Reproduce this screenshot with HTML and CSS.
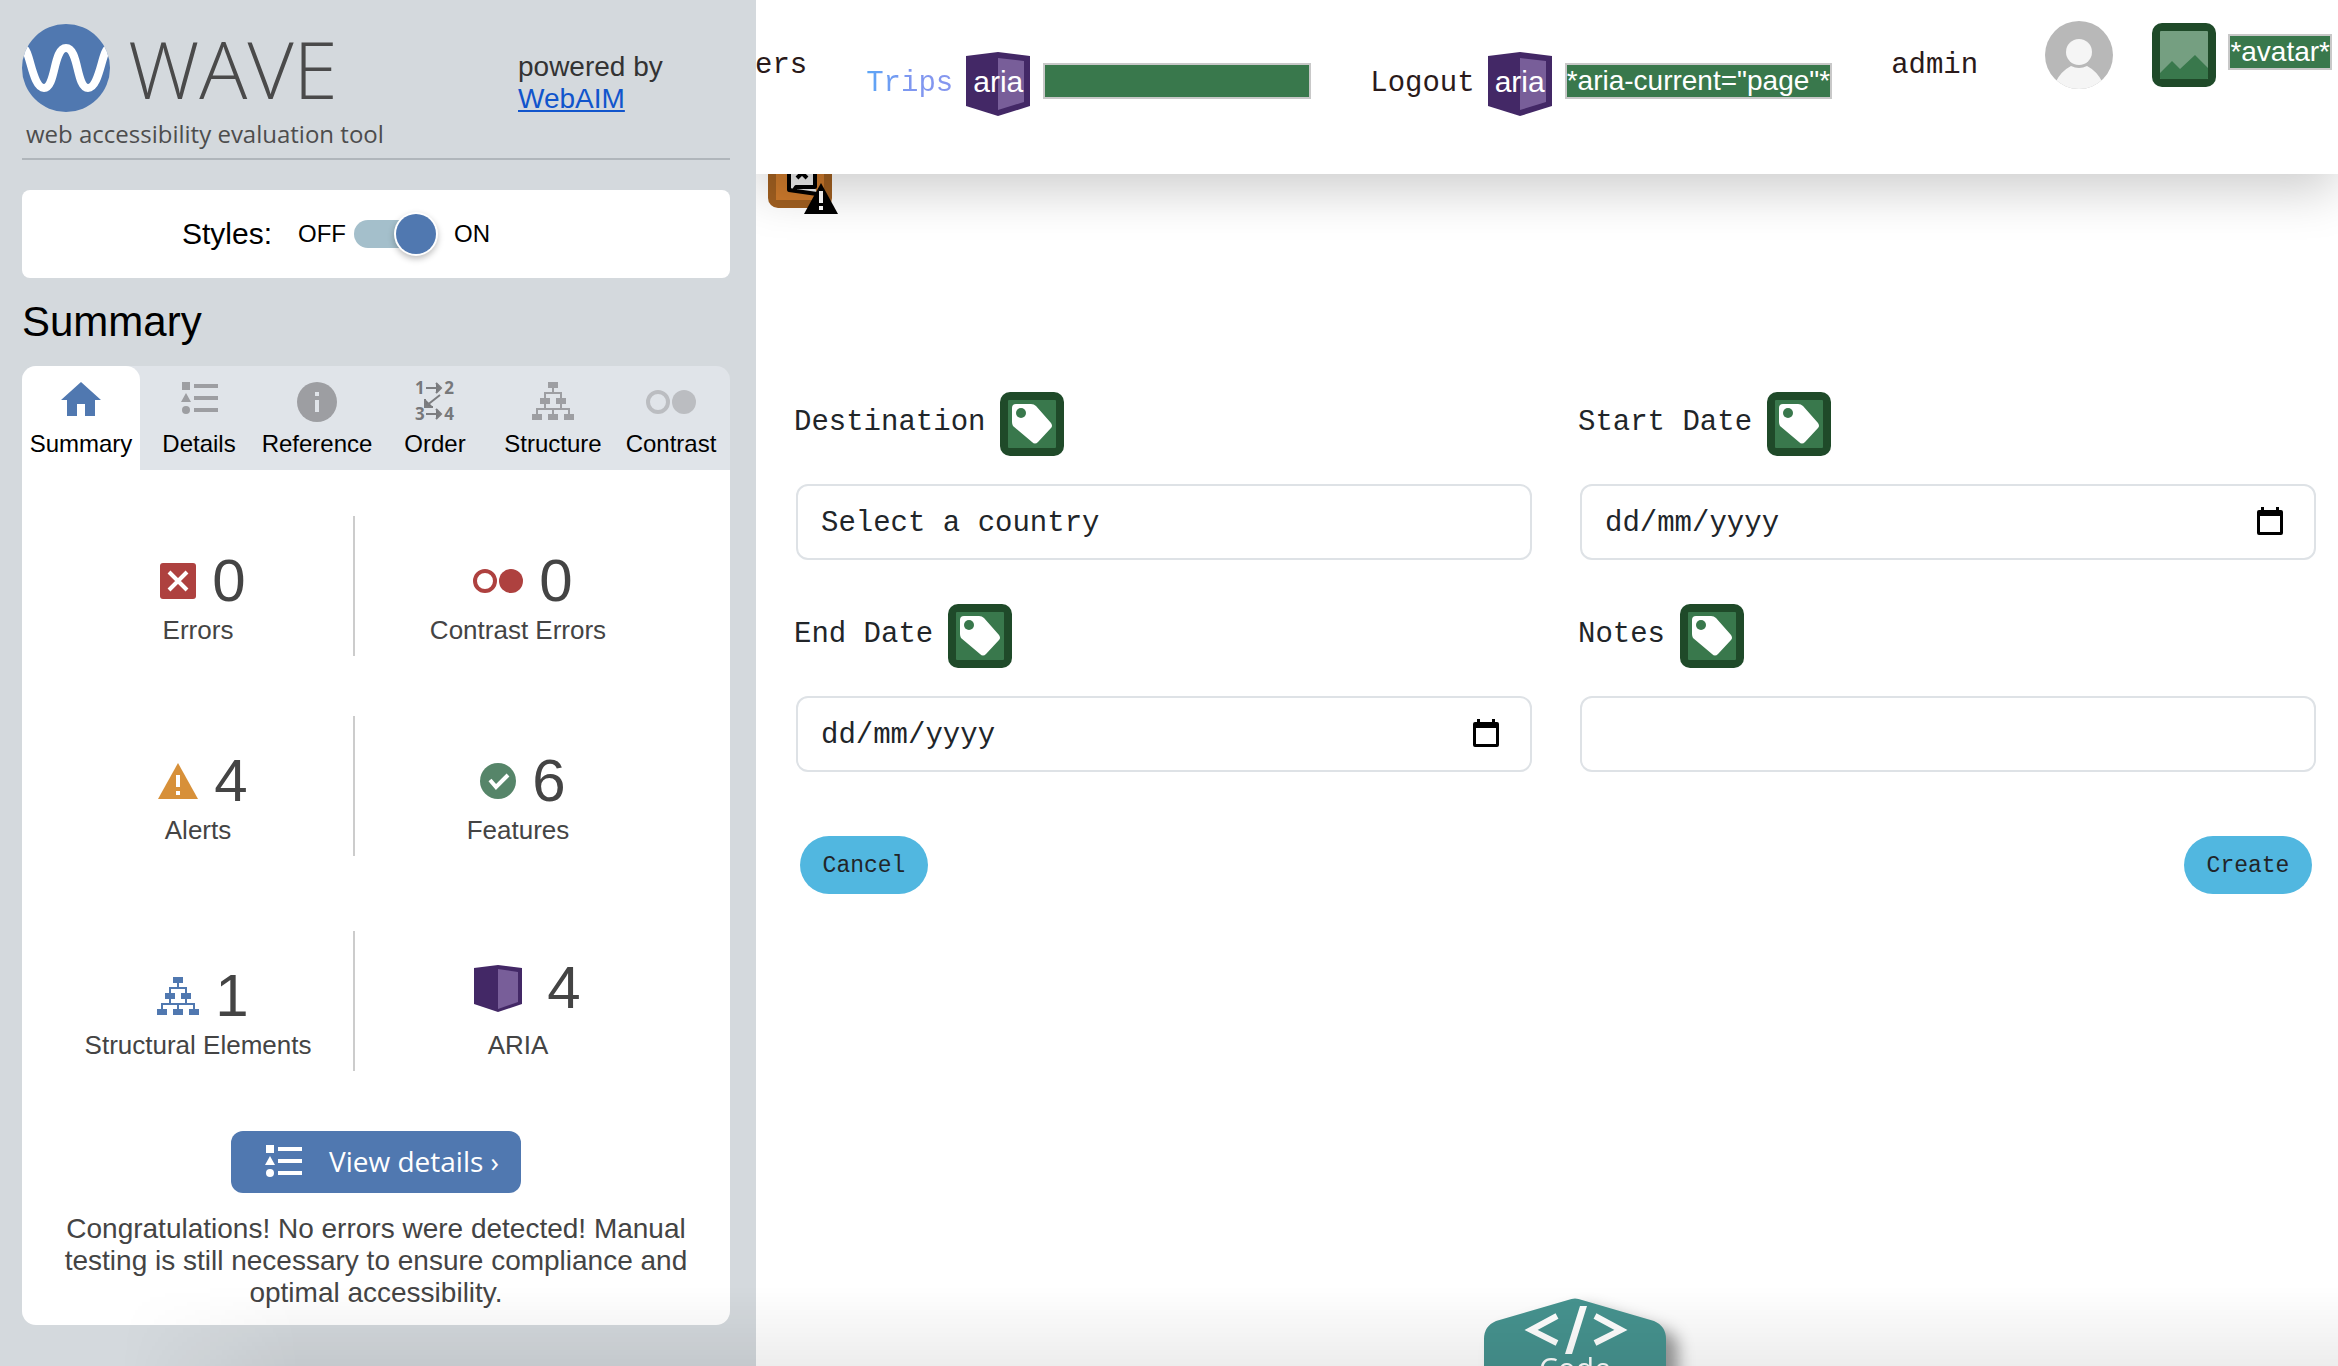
FILE: index.html
```html
<!DOCTYPE html>
<html lang="en-GB">
<head>
<meta charset="utf-8">
<title>WAVE accessibility evaluation</title>
<link rel="stylesheet" href="styles.css">
</head>
<body>
<svg class="defs" aria-hidden="true">
  <symbol id="i-list" viewBox="0 0 37 32"><path d="M1 0h8v8H1zM5 11l5 9H0zM13 2h24v4H13zM13 14h24v4H13zM13 26h24v4H13z"/><circle cx="5" cy="28" r="4"/></symbol>
  <symbol id="i-tree" viewBox="0 0 42 38"><path d="M16 0h10v6H16zM8 16h10v6H8zM24 16h10v6H24zM0 32h10v6H0zM16 32h10v6H16zM32 32h10v6H32z"/><path d="M21 5v6M13 17v-6h16v6M13 21v6M29 21v6M5 33v-6h32v6M21 27v6" fill="none" stroke="currentColor" stroke-width="2"/></symbol>
  <symbol id="i-contrast" viewBox="0 0 50 24"><circle cx="12" cy="12" r="10" fill="none" stroke="currentColor" stroke-width="4"/><circle cx="38" cy="12" r="12"/></symbol>
  <symbol id="i-cube" viewBox="0 0 64 64"><path d="M0 4L32 0l32 4v50L32 64 0 54z" fill="#432866"/><path d="M32 6l26 3v41l-26 8z" fill="#785e99"/></symbol>
  <symbol id="i-tag" viewBox="0 0 64 64"><rect width="64" height="64" rx="10" fill="#1f4a29"/><rect x="8" y="8" width="48" height="48" rx="1" fill="#39784c"/><path d="M16 12h15q3 0 5 2l15 17q2 3 0 5L38 50q-3 3-6 0L13 34q-1-2-1-4V16q0-4 4-4z" fill="#fff"/><circle cx="21" cy="21" r="5" fill="#39784c"/></symbol>
  <symbol id="i-calendar" viewBox="0 0 26 28"><path d="M2 3h2V0h3v3h12V0h3v3h2q2 0 2 2v21q0 2-2 2H2q-2 0-2-2V5q0-2 2-2zm1 6v16h20V9z"/></symbol>
</svg>

<aside class="sidebar">
  <header class="brand">
    <div class="brand-name">
      <div class="brand-title">
        <svg width="88" height="88" viewBox="0 0 88 88"><circle cx="44" cy="44" r="44" fill="#5078b0"/><clipPath id="logo-clip"><circle cx="44" cy="44" r="44"/></clipPath><path clip-path="url(#logo-clip)" d="M1 24C8 24 10 64 22 64S31 24 44 24s10 40 22 40 14-40 21-40" fill="none" stroke="#fff" stroke-width="8"/></svg>
        <span class="wordmark">WAVE</span>
      </div>
      <p class="tagline">web accessibility evaluation tool</p>
    </div>
    <p class="powered">powered by<br><a href="#webaim">WebAIM</a></p>
  </header>

  <div class="styles-card">
    <label class="styles-label" for="styles-toggle">Styles:</label>
    <span>OFF</span>
    <input class="switch" type="checkbox" id="styles-toggle" checked>
    <span>ON</span>
  </div>

  <h1 class="heading">Summary</h1>

  <nav class="tabs">
    <button class="tab tab-active"><span class="tab-icon"><svg width="40" height="34" viewBox="0 0 40 34"><path d="M20 0l20 18h-6v16H24V22h-8v12H6V18H0z"/></svg></span>Summary</button>
    <button class="tab"><span class="tab-icon"><svg width="37" height="32"><use href="#i-list"/></svg></span>Details</button>
    <button class="tab"><span class="tab-icon"><svg width="40" height="40" viewBox="0 0 40 40"><circle cx="20" cy="20" r="20"/><path d="M18 10h4v4h-4zM18 18h4v12h-4z" fill="#e0e4e9"/></svg></span>Reference</button>
    <button class="tab tab-order"><span class="tab-icon"><span class="order-art"><svg width="38" height="40" viewBox="0 0 38 40" fill="none" stroke="#7c7d80" stroke-width="2"><path d="M10 6h15M20 1l5 5-5 5M10 32h15M20 27l5 5-5 5M24 13L10 24M9 17v8h8"/></svg><b>1</b><b>2</b><b>3</b><b>4</b></span></span>Order</button>
    <button class="tab"><span class="tab-icon"><svg width="42" height="38"><use href="#i-tree"/></svg></span>Structure</button>
    <button class="tab tab-contrast"><span class="tab-icon"><svg width="50" height="24"><use href="#i-contrast"/></svg></span>Contrast</button>
  </nav>

  <section class="panel">
    <div class="stats">
      <div class="stat divided">
        <div class="value red"><svg width="36" height="36" viewBox="0 0 36 36"><rect width="36" height="36" rx="3"/><path d="M9 9l18 18M27 9L9 27" stroke="#fff" stroke-width="4"/></svg><span>0</span></div>
        <div class="stat-label">Errors</div>
      </div>
      <div class="stat">
        <div class="value red"><svg width="50" height="24"><use href="#i-contrast"/></svg><span>0</span></div>
        <div class="stat-label">Contrast Errors</div>
      </div>
      <div class="stat divided">
        <div class="value amber"><svg width="40" height="36" viewBox="0 0 40 36"><path d="M20 0l20 36H0z"/><path d="M18 12h4v12h-4zM18 28h4v4h-4z" fill="#fff"/></svg><span>4</span></div>
        <div class="stat-label">Alerts</div>
      </div>
      <div class="stat">
        <div class="value green"><svg width="36" height="36" viewBox="0 0 36 36"><circle cx="18" cy="18" r="18"/><path d="M10 17l6 7 12-12" fill="none" stroke="#fff" stroke-width="4"/></svg><span>6</span></div>
        <div class="stat-label">Features</div>
      </div>
      <div class="stat divided last-row">
        <div class="value blue"><svg width="42" height="38"><use href="#i-tree"/></svg><span>1</span></div>
        <div class="stat-label">Structural Elements</div>
      </div>
      <div class="stat last-row raised">
        <div class="value"><svg width="66" height="47" viewBox="-9 0 66 47"><path d="M0 3L24 0l24 3v36l-24 8L0 39z" fill="#432866"/><path d="M24 4l20 3v30l-20 7z" fill="#785e99"/></svg><span>4</span></div>
        <div class="stat-label">ARIA</div>
      </div>
    </div>
    <button class="details-button"><svg width="37" height="32"><use href="#i-list"/></svg>View details ›</button>
    <p class="result">Congratulations! No errors were detected! Manual testing is still necessary to ensure compliance and optimal accessibility.</p>
  </section>
</aside>

<div class="site">
  <header class="site-header">
    <nav class="site-nav">
      <a class="nav-link" href="#users">ers</a>
      <div class="annotated">
        <a class="nav-link current" href="#trips">Trips</a>
        <span class="aria-icon"><svg width="64" height="64"><use href="#i-cube"/></svg><span>aria</span></span>
        <span class="note note-blank"></span>
      </div>
      <div class="annotated">
        <a class="nav-link" href="#logout">Logout</a>
        <span class="aria-icon"><svg width="64" height="64"><use href="#i-cube"/></svg><span>aria</span></span>
        <span class="note">*aria-current="page"*</span>
      </div>
      <span class="nav-link">admin</span>
    </nav>
    <div class="user">
      <svg class="avatar" width="68" height="68" viewBox="0 0 68 68"><clipPath id="avatar-clip"><circle cx="34" cy="34" r="34"/></clipPath><g clip-path="url(#avatar-clip)"><rect width="68" height="68" fill="#b8b8b8"/><path d="M10 62Q16 50 26 45q8 4 16 0 10 5 16 17v8H10z" fill="#f5f5f5"/><circle cx="34" cy="31" r="13" fill="#f5f5f5"/></g></svg>
      <svg width="64" height="64" viewBox="0 0 64 64"><rect width="64" height="64" rx="10" fill="#1f4a29"/><rect x="8" y="8" width="48" height="48" rx="1" fill="#759f81"/><path d="M8 50l12-12 8 8 15-14 13 13v10q0 1-1 1H9q-1 0-1-1z" fill="#39784c"/></svg>
      <span class="note">*avatar*</span>
    </div>
  </header>

  <main class="content">
    <svg class="alert-icon" width="70" height="70" viewBox="0 0 70 70"><rect width="64" height="64" rx="10" fill="#a05f20"/><rect x="8" y="8" width="48" height="48" fill="#cd7a2c"/><path d="M21 10h26v33l2 7-28-4z" fill="#eee"/><path d="M47 10v33H28l-2 3M21 10v36l28 4" fill="none" stroke="#000" stroke-width="4" stroke-linejoin="round"/><path d="M29 34l5-5 5 5" fill="none" stroke="#000" stroke-width="4"/><path d="M53 39l17 31H36z" fill="#000"/><path d="M51 47h4v12h-4zM51 62h4v4h-4z" fill="#fff"/></svg>

    <form class="trip-form">
      <div class="field">
        <div class="field-head"><label for="destination">Destination</label><svg width="64" height="64"><use href="#i-tag"/></svg></div>
        <select class="control" id="destination"><option>Select a country</option></select>
      </div>
      <div class="field">
        <div class="field-head"><label for="start">Start Date</label><svg width="64" height="64"><use href="#i-tag"/></svg></div>
        <div class="control date"><input type="text" id="start" placeholder="dd/mm/yyyy"><button type="button" aria-label="Pick start date"><svg width="26" height="28"><use href="#i-calendar"/></svg></button></div>
      </div>
      <div class="field">
        <div class="field-head"><label for="end">End Date</label><svg width="64" height="64"><use href="#i-tag"/></svg></div>
        <div class="control date"><input type="text" id="end" placeholder="dd/mm/yyyy"><button type="button" aria-label="Pick end date"><svg width="26" height="28"><use href="#i-calendar"/></svg></button></div>
      </div>
      <div class="field">
        <div class="field-head"><label for="notes">Notes</label><svg width="64" height="64"><use href="#i-tag"/></svg></div>
        <input class="control" type="text" id="notes">
      </div>
      <div class="actions">
        <button type="button" class="pill">Cancel</button>
        <button type="submit" class="pill">Create</button>
      </div>
    </form>
  </main>

  <div class="code-dock">
    <button class="code-button">
      <svg width="182" height="120" viewBox="0 0 182 120"><path d="M84 2q7-3 14 0l72 21q12 5 12 18v79H0V41q0-13 12-18z" fill="#46938f"/><path d="M73 18L47 32l26 13M111 18l26 14-26 13" fill="none" stroke="#fff" stroke-width="6"/><path d="M96 8h7L88 56h-7z" fill="#fff"/></svg>
      <span>Code</span>
    </button>
  </div>
</div>
<div class="bottom-shade"></div>
</body>
</html>
```
FILE: styles.css
```css
* { box-sizing: border-box; }
body {
  margin: 0;
  display: flex;
  height: 100vh;
  overflow: hidden;
  background: #fff;
  font-family: "Liberation Sans", Arial, sans-serif;
}
svg { display: block; flex: none; fill: currentColor; }
button, input, select { font: inherit; color: inherit; border: 0; background: none; padding: 0; margin: 0; }
p, h1 { margin: 0; }
.defs { position: absolute; width: 0; height: 0; }

/* Evaluation sidebar */
.sidebar {
  flex: none;
  width: 756px;
  padding: 24px 26px 42px 22px;
  background: #d4d9dd;
}
.brand {
  display: flex;
  justify-content: space-between;
  height: 136px;
  border-bottom: 2px solid #b0b6bb;
}
.brand-title { display: flex; align-items: center; gap: 18px; height: 88px; }
.wordmark {
  font: 300 80px/88px "Open Sans", sans-serif;
  color: #4a4a4a;
}
.tagline {
  padding: 6px 4px;
  font: 24px/32px "Open Sans", sans-serif;
  color: #4d4d4d;
}
.powered { width: 212px; padding-top: 27px; font-size: 28px; line-height: 32px; color: #333; }
.powered a { color: #1155cc; }

.styles-card {
  display: flex;
  align-items: center;
  gap: 8px;
  height: 88px;
  margin-top: 30px;
  padding: 0 160px;
  border-radius: 8px;
  background: #fff;
  font-size: 24px;
}
.styles-label { margin-right: 18px; font-size: 30px; }
.switch {
  appearance: none;
  display: flex;
  justify-content: flex-end;
  align-items: center;
  width: 82px;
  height: 28px;
  margin-right: 10px;
  border-radius: 14px;
  background: #a4bfcb;
}
.switch::after {
  content: "";
  width: 40px;
  height: 40px;
  flex: none;
  border-radius: 50%;
  background: #5078b0;
  box-shadow: 0 0 0 2px #fff, 0 3px 6px 2px rgba(0, 0, 0, .25);
}
.heading { margin: 20px 0; font-size: 42px; line-height: 48px; font-weight: 400; }

.tabs {
  display: grid;
  grid-template-columns: repeat(6, 1fr);
  border-radius: 14px 14px 0 0;
  background: #e0e4e9;
}
.tab {
  display: flex;
  flex-direction: column;
  align-items: center;
  gap: 8px;
  padding: 16px 0 12px;
  font-size: 24px;
  line-height: 28px;
}
.tab-active { border-radius: 14px 14px 0 0; background: #fff; }
.tab-icon { height: 40px; color: #9d9ea2; }
.tab-active .tab-icon { color: #5078b0; }
.tab-contrast .tab-icon { display: flex; align-items: center; color: #bbbdc1; }
.order-art { position: relative; display: block; font-size: 17px; line-height: 12px; color: #77787b; }
.order-art b { position: absolute; left: -1px; top: 0; font-family: "Open Sans", sans-serif; }
.order-art b:nth-of-type(even) { left: auto; right: 0; }
.order-art b:nth-of-type(n+3) { top: 26px; }

.panel {
  display: flex;
  flex-direction: column;
  align-items: center;
  padding: 46px 28px 16px;
  border-radius: 0 0 14px 14px;
  background: #fff;
  color: #444;
}
.stats {
  display: grid;
  grid-template-columns: 314fr 326fr;
  row-gap: 60px;
  align-self: stretch;
  margin: 0 21px 60px -9px;
}
.stat { display: flex; flex-direction: column; align-items: center; gap: 2px; height: 140px; padding-top: 33px; }
.divided { padding-left: 2px; border-right: 2px solid #ccc; }
.last-row { margin-top: 15px; }
.raised { padding-top: 25px; gap: 10px; }
.value { display: flex; align-items: center; gap: 16px; padding-left: 10px; height: 64px; }
.value span { font-size: 60px; line-height: 64px; color: #444; }
.red { color: #ae413f; }
.amber { color: #d79039; }
.green { color: #568569; }
.blue { color: #5078b0; }
.stat-label { font-size: 26px; line-height: 30px; }
.details-button {
  display: flex;
  align-items: center;
  gap: 27px;
  height: 62px;
  padding: 0 22px 2px 34px;
  border-radius: 12px;
  background: #5078b0;
  color: #fff;
  font-family: "Open Sans", sans-serif;
  font-size: 28px;
}
.result { margin-top: 20px; font-size: 28px; line-height: 32px; text-align: center; }

/* Evaluated site */
.site {
  flex: 1;
  min-width: 0;
  display: flex;
  flex-direction: column;
  overflow: hidden;
  font-family: "Liberation Mono", monospace;
  font-size: 29px;
  color: #212529;
}
.site-header {
  position: relative;
  z-index: 1;
  flex: none;
  display: flex;
  justify-content: space-between;
  height: 174px;
  padding-right: 6px;
  background: #fff;
  box-shadow: 0 16px 48px rgba(0, 0, 0, .2);
  color: #2a1a1a;
}
.site-nav { display: flex; gap: 59px; align-items: flex-start; padding-top: 48px; margin-left: -1px; }
.nav-link { color: inherit; line-height: 36px; text-decoration: none; }
.current {
  background: linear-gradient(90deg, #5aa5f6, #7f97f0 50%, #8596ee);
  background-clip: text;
  color: transparent;
}
.annotated { display: flex; align-items: center; gap: 13px; padding-top: 4px; }
.aria-icon { position: relative; font: 30px/60px "Liberation Sans", Arial, sans-serif; color: #fff; }
.aria-icon span { position: absolute; inset: 0; text-align: center; }
.note {
  height: 36px;
  margin-bottom: 6px;
  border: 2px solid #c8c8c8;
  background: #39784c;
  color: #fff;
  font: 28px/32px "Liberation Sans", Arial, sans-serif;
}
.note-blank { width: 268px; }
.user { display: flex; align-items: center; gap: 12px; height: 68px; margin-top: 21px; }
.avatar { margin-right: 27px; }

.content { padding: 0 22px 0 38px; }
.alert-icon { margin: -30px 0 178px -26px; }
.trip-form { display: grid; grid-template-columns: 1fr 1fr; column-gap: 46px; row-gap: 44px; }
.field-head { display: flex; align-items: center; gap: 15px; height: 64px; margin-bottom: 28px; }
.field-head label { line-height: 36px; margin-bottom: 2px; }
.control {
  appearance: none;
  display: flex;
  align-items: center;
  width: calc(100% - 2px);
  height: 76px;
  margin-left: 2px;
  padding: 2px 23px 0;
  border: 2px solid #dee2e6;
  border-radius: 12px;
  background: #fff;
}
.date { justify-content: space-between; padding-right: 31px; }
.date input { flex: 1; min-width: 0; outline: 0; }
.date button { margin-bottom: 4px; color: #000; }
.date input::placeholder { color: #212529; opacity: 1; }
.actions { grid-column: 1 / -1; display: flex; justify-content: space-between; padding: 20px 4px 0 6px; }
.pill { width: 128px; height: 58px; padding-top: 2px; border-radius: 29px; background: #51b7e0; font-size: 23px; }

.code-dock { display: flex; justify-content: center; height: 68px; margin-top: auto; padding-left: 56px; }
.code-button {
  position: relative;
  height: 120px;
  filter: drop-shadow(12px 10px 8px rgba(0, 0, 0, .4));
  font: 30px/40px "Open Sans", sans-serif;
  color: #fff;
}
.code-button span { position: absolute; left: 0; right: 0; top: 50px; }
.bottom-shade {
  position: fixed;
  inset: auto 0 0 120px;
  height: 80px;
  background: linear-gradient(rgba(0, 0, 0, 0), rgba(0, 0, 0, .07));
  mask-image: linear-gradient(90deg, transparent, #000 180px);
  pointer-events: none;
}
```
